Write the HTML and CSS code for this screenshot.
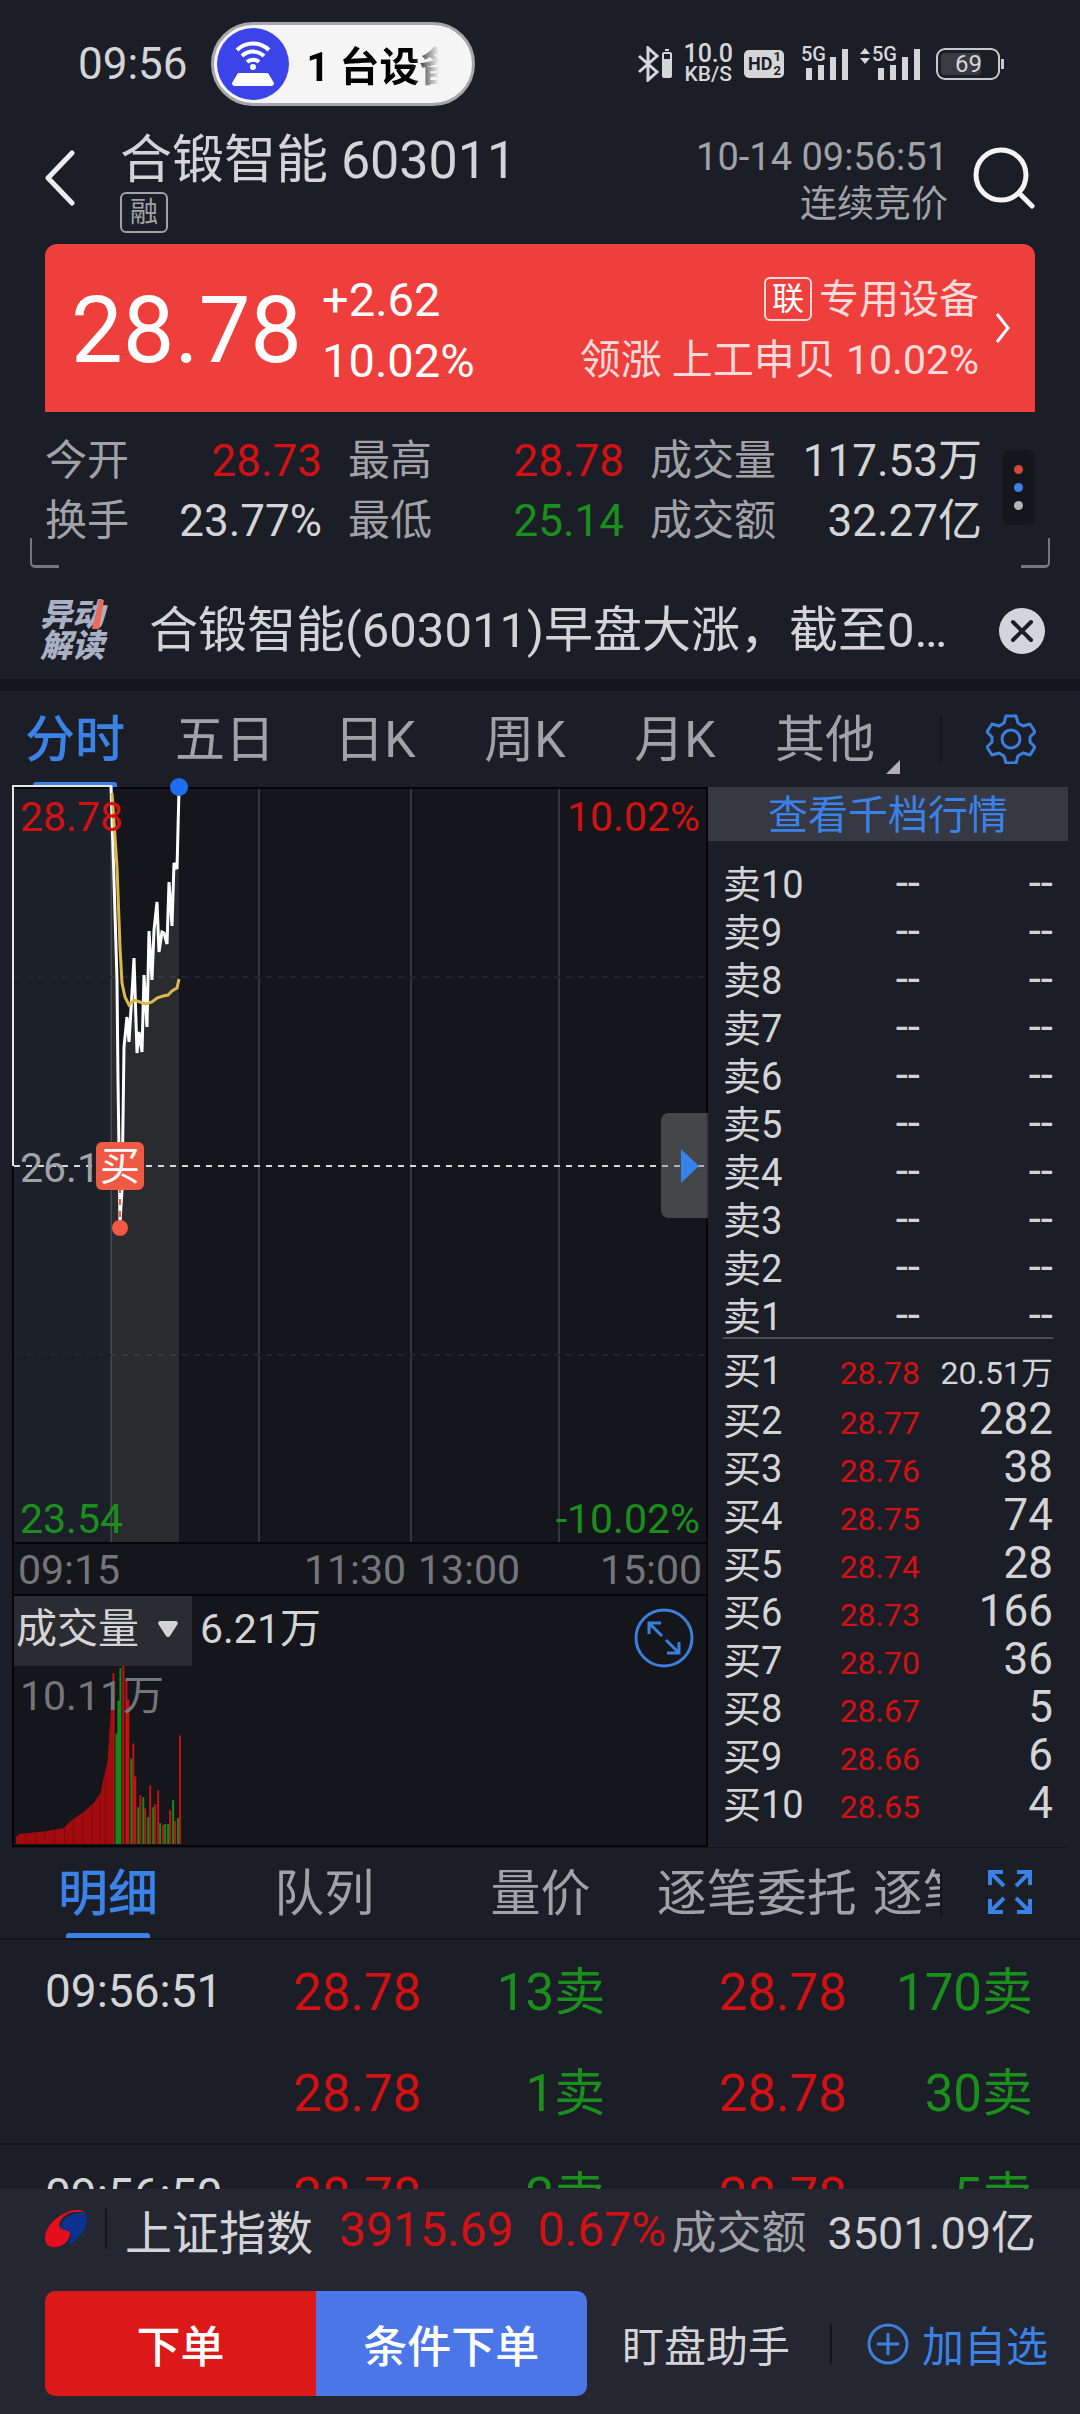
FILE: index.html
```html
<!DOCTYPE html>
<html lang="zh-CN">
<head>
<meta charset="utf-8">
<meta name="viewport" content="width=device-width, initial-scale=1">
<title>合锻智能 603011</title>
<link rel="stylesheet" href="styles.css">
</head>
<body>
<div class="statusbar">
  <div class="status-left">
    <span class="clock">09:56</span>
    <div class="pill">
      <span class="pill-icon">
        <svg viewBox="0 0 72 72" width="72" height="72" fill="none" stroke="#fff" stroke-width="4">
          <path d="M20 22a23 23 0 0 1 32 0M25 28a16 16 0 0 1 22 0M30 34a9 9 0 0 1 12 0"/>
          <circle cx="36" cy="39" r="3" fill="#fff" stroke="none"/>
          <path d="M21 45h30l6 10q0 3-3 3H18q-3 0-3-3z" fill="#fff" stroke="none"/>
        </svg>
      </span>
      <span class="pill-text">1 台设备</span>
    </div>
  </div>
  <div class="status-right">
    <svg viewBox="0 0 34 36" width="34" height="36" fill="none" stroke="#d6d6d8" stroke-width="3">
      <path d="M1 10l18 16-9 8V2l9 8L1 26"/>
      <path d="M26 6h6q2 0 2 2v22q0 2-2 2h-6q-2 0-2-2V8q0-2 2-2z" fill="#d6d6d8" stroke="none"/><path d="M27 3h4v2h-4z" fill="#d6d6d8" stroke="none"/><path d="M26 8h6v5h-6z" fill="#1c1e28" stroke="none"/>
    </svg>
    <span class="netspeed"><b class="speed">10.0</b><b>KB/S</b></span>
    <span class="hd">HD<span class="hd-num"><i>1</i><i>2</i></span></span>
    <span class="signal">
      <b>5G</b>
      <svg viewBox="0 0 44 32" width="44" height="32" fill="#d6d6d8"><path d="M1 20h6v12H1zM13 17h6v15h-6zM25 9h6v23h-6zM37 1h6v31h-6z"/></svg>
    </span>
    <span class="signal signal-2">
      <svg class="updown" viewBox="0 0 11 16" width="11" height="16" fill="#d6d6d8"><path d="M5 0l5 6H0zM5 16l5-6H0z"/></svg>
      <b>5G</b>
      <svg viewBox="0 0 44 32" width="44" height="32" fill="#d6d6d8"><path d="M1 20h6v12H1zM13 17h6v15h-6zM25 9h6v23h-6zM37 1h6v31h-6z"/></svg>
    </span>
    <span class="battery"><span class="battery-level">69</span></span>
  </div>
</div>

<header class="header">
  <button class="icon-btn back" aria-label="返回">
    <svg viewBox="0 0 32 56" width="32" height="56" fill="none" stroke="#ececee" stroke-width="5" stroke-linecap="round" stroke-linejoin="round"><path d="M28 3L4 28l24 25"/></svg>
  </button>
  <div class="title-block">
    <h1>合锻智能 603011</h1>
    <span class="tag">融</span>
  </div>
  <div class="time-block"><span>10-14 09:56:51</span><span class="phase">连续竞价</span></div>
  <button class="icon-btn" aria-label="搜索">
    <svg viewBox="0 0 64 64" width="64" height="64" fill="none" stroke="#f4f4f4" stroke-width="5" stroke-linecap="round"><circle cx="29" cy="29" r="25"/><path d="M47 47l13 13"/></svg>
  </button>
</header>

<main>
<section class="quote">
  <span class="price">28.78</span>
  <span class="change"><span>+2.62</span><span>10.02%</span></span>
  <a class="sector" href="#">
    <span class="sector-lines">
      <span class="sector-name"><span class="link-tag">联</span>专用设备</span>
      <span>领涨 上工申贝 10.02%</span>
    </span>
    <svg viewBox="0 0 16 32" width="16" height="32" fill="none" stroke="#fff" stroke-width="3"><path d="M2 2l11 14L2 30"/></svg>
  </a>
</section>

<section class="stats">
  <dl class="stats-grid">
    <div><dt>今开</dt><dd class="up">28.73</dd></div>
    <div><dt>最高</dt><dd class="up">28.78</dd></div>
    <div><dt>成交量</dt><dd>117.53万</dd></div>
    <div><dt>换手</dt><dd>23.77%</dd></div>
    <div><dt>最低</dt><dd class="down">25.14</dd></div>
    <div><dt>成交额</dt><dd>32.27亿</dd></div>
  </dl>
  <button class="more" aria-label="更多"><i class="dot-red"></i><i class="dot-blue"></i><i class="dot-gray"></i></button>
</section>

<section class="news">
  <span class="news-logo"><span>异动</span><span>解读</span>
    <svg class="news-slash" viewBox="0 0 12 30" width="12" height="30"><path d="M7 0h5L7 29H0z" fill="#ee6a5c"/></svg>
  </span>
  <a class="news-text" href="#">合锻智能(603011)早盘大涨，截至09:56</a>
  <button class="icon-btn" aria-label="关闭">
    <svg viewBox="0 0 46 46" width="46" height="46"><circle cx="23" cy="23" r="23" fill="#d4d5da"/><path d="M14 14l18 18M32 14L14 32" stroke="#1c1e28" stroke-width="4" stroke-linecap="round"/></svg>
  </button>
</section>

<nav class="tabs period-tabs">
  <button class="tab active">分时</button>
  <button class="tab">五日</button>
  <button class="tab">日K</button>
  <button class="tab">周K</button>
  <button class="tab">月K</button>
  <button class="tab has-more">其他</button>
  <button class="tab-tool" aria-label="设置">
    <svg viewBox="0 0 50 50" width="50" height="50" fill="none" stroke="#3b7fdd" stroke-width="3" stroke-linejoin="round"><path d="M20 2h10l2 7 5 3 7-2 5 8-5 5v5l5 5-5 8-7-2-5 3-2 7H20l-2-7-5-3-7 2-5-8 5-5v-5l-5-5 5-8 7 2 5-3z"/><circle cx="25" cy="25" r="9"/></svg>
  </button>
</nav>

<section class="market">
  <div class="chart-col">
    <div class="chart">
      <svg class="plot" viewBox="0 0 696 757">
        <rect x="1" y="1" width="694" height="755" fill="#15161b" stroke="#050509" stroke-width="2"/>
        <rect x="2" y="2" width="97" height="753" fill="#1c202a"/>
        <g stroke="#34353f" stroke-width="2"><path d="M99 2v753M247 2v753M399 2v753M547 2v753"/></g>
        <path d="M2 190h692M2 568h692" stroke="#23252d" stroke-width="2" stroke-dasharray="6 6"/>
        <path d="M99 0L102 93 105 193 106 293 108 435 110 403 112 260 115 230 117 255 120 206 122 171 125 266 127 245 130 265 132 188 135 240 137 144 140 193 142 143 145 115 147 165 150 145 152 146 155 157 157 95 160 139 162 76 165 82 167 2V755H99z" fill="#fff" fill-opacity=".09"/>
        <path d="M1 379V-1H100" fill="none" stroke="#e6e6e6" stroke-width="2"/>
        <path d="M2 379h692" stroke="#d8d8d8" stroke-width="2" stroke-dasharray="6 6"/>
        <path d="M99 -1L102 93 105 193 106 293 108 435 110 403 112 260 115 230 117 255 120 206 122 171 125 266 127 245 130 265 132 188 135 240 137 144 140 193 142 143 145 115 147 165 150 145 152 146 155 157 157 95 160 139 162 76 165 82 167 2" fill="none" stroke="#fff" stroke-width="3"/>
        <path d="M100 6L105 80 108 160 110 196 113 210 117 218 122 213 128 215 134 217 140 215 145 211 151 209 156 208 160 204 165 201 167 192" fill="none" stroke="#dcb84a" stroke-width="3"/>
        <path d="M108 400v35" stroke="#ee5a42" stroke-width="2" stroke-dasharray="6 6"/>
        <circle cx="108" cy="441" r="8" fill="#f05a42"/>
        <circle cx="167" cy="0" r="9" fill="#1e6fee"/>
      </svg>
      <span class="lbl top-left up">28.78</span>
      <span class="lbl top-right up">10.02%</span>
      <span class="lbl mid-left">26.16</span>
      <span class="lbl bottom-left down">23.54</span>
      <span class="lbl bottom-right down">-10.02%</span>
      <span class="buy-mark">买</span>
      <button class="drawer" aria-label="收起盘口"><svg viewBox="0 0 18 34" width="18" height="34"><path d="M0 0l18 17L0 34z" fill="#3582ec"/></svg></button>
    </div>
    <div class="axis"><span>09:15</span><span class="mid">11:30</span><span class="mid">13:00</span><span class="end">15:00</span></div>
    <div class="volume">
      <div class="volume-head">
        <button class="indicator">成交量<svg viewBox="0 0 20 16" width="20" height="16"><path d="M2 0h16q3 1 1 4l-7 11q-2 2-4 0L1 4Q-1 1 2 0z" fill="#d4d4d6"/></svg></button>
        <span>6.21万</span>
      </div>
      <svg class="plot" viewBox="0 0 696 180">
        <path d="M2 179V172L5 169 34 166 50 163 57 156 71 146 80 138 87 128 90 113 94 97 97 49 99 20V179z" fill="#a30c0e"/>
        <path d="M12 168v11M22 168v11M31 167v12M41 165v14M51 163v16M60 155v24M69 149v30M78 141v38M86 131v48M92 108v71" stroke="#7c0c10" stroke-width="1"/>
        <path d="M100 7V179M110 0V179M113 14V179M115 34V179M120 78V179M122 111V179M127 130V179M132 143V179M137 120V179M142 139V179M145 125V179M150 160V179M157 145V179M162 156V179M167 70V179" stroke="#c41212" stroke-width="2"/>
        <path d="M103 68V179M105 35V179M107 2V179M118 93V179M125 142V179M130 132V179M135 152V179M140 142V179M147 158V179M152 159V179M155 159V179M160 135V179M165 153V179" stroke="#168a16" stroke-width="2"/>
      </svg>
      <span class="lbl volume-max">10.11万</span>
      <button class="zoom-btn" aria-label="放大">
        <svg viewBox="0 0 60 60" width="60" height="60" fill="none" stroke="#3b7fdd" stroke-width="3"><circle cx="30" cy="30" r="28"/><path d="M15 26V15h12M15 15l13 13M33 45h12V34M45 45L32 32"/></svg>
      </button>
    </div>
  </div>

  <div class="book">
    <button class="book-head">查看千档行情</button>
    <table class="book-table sells">
      <tr><th>卖10</th><td>--</td><td>--</td></tr>
      <tr><th>卖9</th><td>--</td><td>--</td></tr>
      <tr><th>卖8</th><td>--</td><td>--</td></tr>
      <tr><th>卖7</th><td>--</td><td>--</td></tr>
      <tr><th>卖6</th><td>--</td><td>--</td></tr>
      <tr><th>卖5</th><td>--</td><td>--</td></tr>
      <tr><th>卖4</th><td>--</td><td>--</td></tr>
      <tr><th>卖3</th><td>--</td><td>--</td></tr>
      <tr><th>卖2</th><td>--</td><td>--</td></tr>
      <tr><th>卖1</th><td>--</td><td>--</td></tr>
    </table>
    <div class="book-divider"></div>
    <table class="book-table buys">
      <tr><th>买1</th><td class="px">28.78</td><td class="long">20.51万</td></tr>
      <tr><th>买2</th><td class="px">28.77</td><td>282</td></tr>
      <tr><th>买3</th><td class="px">28.76</td><td>38</td></tr>
      <tr><th>买4</th><td class="px">28.75</td><td>74</td></tr>
      <tr><th>买5</th><td class="px">28.74</td><td>28</td></tr>
      <tr><th>买6</th><td class="px">28.73</td><td>166</td></tr>
      <tr><th>买7</th><td class="px">28.70</td><td>36</td></tr>
      <tr><th>买8</th><td class="px">28.67</td><td>5</td></tr>
      <tr><th>买9</th><td class="px">28.66</td><td>6</td></tr>
      <tr><th>买10</th><td class="px">28.65</td><td>4</td></tr>
    </table>
  </div>
</section>

<nav class="tabs detail-tabs">
  <div class="tab-scroll">
    <button class="tab active">明细</button>
    <button class="tab">队列</button>
    <button class="tab">量价</button>
    <button class="tab">逐笔委托</button>
    <button class="tab">逐笔成交</button>
  </div>
  <button class="tab-tool" aria-label="全屏">
    <svg viewBox="0 0 44 44" width="44" height="44" fill="none" stroke="#3b82e6" stroke-width="4"><path d="M2 15V2h13M2 2l14 14M29 2h13v13M42 2L28 16M2 29v13h13M2 42l14-14M29 42h13V29M42 42L28 28"/></svg>
  </button>
</nav>

<section class="trades">
  <table class="trades-table">
    <colgroup><col class="c1"><col class="c2"><col class="c3"><col class="c4"><col class="c5"></colgroup>
    <tr><th>09:56:51</th><td class="up">28.78</td><td class="down">13卖</td><td class="up">28.78</td><td class="down">170卖</td></tr>
    <tr class="group-end"><th></th><td class="up">28.78</td><td class="down">1卖</td><td class="up">28.78</td><td class="down">30卖</td></tr>
    <tr><th>09:56:50</th><td class="up">28.78</td><td class="down">2卖</td><td class="up">28.78</td><td class="down">5卖</td></tr>
  </table>
</section>
</main>

<footer class="footer">
  <div class="index-row">
    <svg viewBox="0 0 42 42" width="42" height="42"><path d="M40 5C36 1 31 1 25 3 10 8 0 20 0 30c0 7 5 10 11 9 8-1 12-6 14-12 1-6-6-4-10-7C12 15 18 6 28 4q7-1 12 1z" fill="#e60d1c"/><path d="M40 5C30 3 16 10 15 20c4 3 12 1 11 8-1 4-2 7-4 10C35 31 42 20 42 11q0-4-2-6z" fill="#0b3291"/></svg>
    <span class="vline"></span>
    <span class="index-name">上证指数</span>
    <span class="index-val up">3915.69</span>
    <span class="index-pct up">0.67%</span>
    <span class="turnover"><span class="muted">成交额</span><span>3501.09亿</span></span>
  </div>
  <div class="action-row">
    <button class="order">下单</button><button class="cond">条件下单</button>
    <button class="assist">盯盘助手</button>
    <span class="vline"></span>
    <button class="add"><svg viewBox="0 0 42 42" width="42" height="42" fill="none" stroke="#3b7fdd" stroke-width="3"><circle cx="21" cy="21" r="19"/><path d="M21 10v22M10 21h22"/></svg>加自选</button>
  </div>
</footer>
</body>
</html>
```
FILE: styles.css
```css
:root {
  --bg: #1b1e27;
  --panel: #15161b;
  --text: #d4d4d6;
  --muted: #a1a2a6;
  --red: #d31113;
  --green: #1a8f1c;
  --blue: #3b82e6;
}
* { box-sizing: border-box; }
body {
  margin: 0;
  min-height: 100vh;
  display: flex;
  flex-direction: column;
  background: var(--bg);
  color: var(--text);
  font-family: Roboto, "Noto Sans CJK SC", sans-serif;
}
main { flex: 1 0 auto; display: flex; flex-direction: column; }
button { border: 0; padding: 0; background: none; color: inherit; font: inherit; }
a { color: inherit; text-decoration: none; }
svg { display: block; flex: none; }
h1, dl, dd { margin: 0; }
.up { color: var(--red); }
.down { color: var(--green); }
.muted { color: var(--muted); }

/* status bar */
.statusbar {
  height: 128px;
  padding: 0 80px 0 78px;
  display: flex;
  align-items: center;
  justify-content: space-between;
}
.status-left, .status-right { display: flex; align-items: center; }
.status-left { gap: 23px; }
.clock { font-size: 44px; }
.pill {
  width: 264px;
  height: 84px;
  padding: 3px;
  border: 3px solid #a6a6aa;
  border-radius: 42px;
  background: #f5f5f6;
  display: flex;
  align-items: center;
}
.pill-icon { width: 72px; height: 72px; border-radius: 50%; background: #3b44e8; flex: none; }
.pill-text {
  margin-left: 18px;
  width: 132px;
  overflow: hidden;
  white-space: nowrap;
  color: #000;
  font-size: 40px;
  font-weight: 700;
  -webkit-mask-image: linear-gradient(90deg, #000 80%, transparent);
  mask-image: linear-gradient(90deg, #000 80%, transparent);
}
.status-right { gap: 11px; color: #d6d6d8; }
.netspeed { display: flex; flex-direction: column; align-items: center; }
.netspeed b { font-size: 21px; line-height: 20px; font-weight: 500; }
.netspeed .speed { font-size: 25px; }
.hd {
  display: flex;
  width: 40px;
  height: 28px;
  padding-left: 4px;
  gap: 1px;
  border-radius: 5px;
  background: #d6d6d8;
  color: var(--bg);
  font-size: 18px;
  line-height: 28px;
  font-weight: 700;
}
.hd-num { display: flex; flex-direction: column; font-size: 13px; line-height: 14px; }
.hd-num i { font-style: normal; }
.signal { position: relative; display: flex; padding-left: 8px; margin-left: 2px; }
.signal b { position: absolute; left: 4px; top: -4px; font-size: 20px; line-height: 20px; font-weight: 500; }
.signal-2 { padding-left: 17px; margin-left: 0; }
.signal-2 b { left: 12px; }
.updown { position: absolute; left: 0; top: 0; }
.battery {
  position: relative;
  width: 64px;
  height: 32px;
  margin-left: 4px;
  padding: 3px;
  border: 2px solid #c8c8ca;
  border-radius: 9px;
}
.battery::after { content: ""; position: absolute; right: -6px; top: 9px; width: 3px; height: 10px; background: #c8c8ca; }
.battery-level {
  display: block;
  width: 40px;
  border-radius: 4px;
  background: #3a3b42;
  padding-left: 14px;
  font-size: 24px;
  line-height: 22px;
}

/* header */
.header { display: flex; padding: 5px 44px 11px; }
.header .icon-btn { display: flex; align-items: center; padding-bottom: 11px; }
.title-block { flex: 1; margin-left: 44px; display: flex; flex-direction: column; align-items: flex-start; gap: 3px; }
h1 { font-size: 52px; line-height: 56px; font-weight: 400; white-space: nowrap; }
.tag {
  width: 48px;
  height: 41px;
  border: 2px solid var(--muted);
  border-radius: 6px;
  color: var(--muted);
  font-size: 28px;
  line-height: 38px;
  text-align: center;
}
.time-block { display: flex; flex-direction: column; align-items: flex-end; margin-right: 24px; color: var(--muted); font-size: 38px; line-height: 48px; }
.phase { font-size: 37px; }

/* quote card */
.quote {
  margin: 0 45px;
  height: 168px;
  padding: 0 24px 0 26px;
  border-radius: 12px 12px 0 0;
  background: #ef3f3d;
  color: #fff;
  display: flex;
  align-items: center;
}
.price { font-size: 92px; line-height: 168px; padding-top: 6px; }
.change { margin-left: 20px; padding-top: 3px; display: flex; flex-direction: column; font-size: 47px; line-height: 61px; }
.sector { margin-left: auto; display: flex; align-items: center; gap: 16px; color: #fbdada; font-size: 41px; line-height: 61px; }
.sector-lines { display: flex; flex-direction: column; align-items: flex-end; padding-top: 3px; }
.sector-name { display: flex; align-items: center; gap: 7px; font-size: 40px; }
.link-tag { width: 48px; height: 44px; border: 2px solid #fbdada; border-radius: 6px; color: #fff; font-size: 32px; line-height: 40px; text-align: center; }

/* statistics */
.stats { position: relative; display: flex; align-items: center; gap: 20px; margin: 0 45px; padding: 19px 0 15px; }
.stats::before, .stats::after {
  content: "";
  position: absolute;
  bottom: -2px;
  width: 27px;
  height: 27px;
  border-bottom: 3px solid #76777c;
}
.stats::before { left: -15px; border-left: 2px solid #76777c; border-bottom-left-radius: 5px; }
.stats::after { right: -15px; border-right: 2px solid #76777c; border-bottom-right-radius: 5px; }
.stats-grid { flex: 1; display: grid; grid-template-columns: 277fr 276fr 332fr; column-gap: 26px; }
.stats-grid div { display: flex; justify-content: space-between; line-height: 60px; }
.stats-grid dt { color: var(--muted); font-size: 42px; }
.stats-grid dd { font-size: 44px; }
.more { width: 33px; height: 75px; margin-bottom: 8px; border-radius: 8px; background: var(--panel); display: flex; flex-direction: column; align-items: center; justify-content: center; gap: 9px; }
.more i { width: 9px; height: 9px; border-radius: 50%; }
.dot-red { background: #d04a38; }
.dot-blue { background: var(--blue); }
.dot-gray { background: #b4b4b6; }

/* news strip */
.news { display: flex; align-items: center; padding: 32px 35px 16px 40px; border-bottom: 12px solid var(--panel); }
.news-logo { position: relative; display: flex; flex-direction: column; width: 70px; color: #a9b0c2; font-size: 32px; line-height: 31px; font-weight: 900; font-style: italic; white-space: nowrap; }
.news-slash { position: absolute; left: 52px; top: 0; }
.news-text { flex: 1; min-width: 0; margin: 0 47px 0 39px; font-size: 49px; line-height: 65px; white-space: nowrap; overflow: hidden; text-overflow: ellipsis; }

/* tab rows */
.tabs { display: flex; }
.tab { position: relative; color: var(--muted); font-size: 50px; white-space: nowrap; }
.tab.active { color: var(--blue); font-weight: 500; }
.tab.active::after {
  content: "";
  position: absolute;
  left: 50%;
  bottom: 0;
  width: 84px;
  height: 5px;
  margin-left: -42px;
  border-radius: 3px 3px 0 0;
  background: var(--blue);
}
.period-tabs { height: 96px; }
.period-tabs .tab { flex: 150; padding-top: 2px; line-height: 94px; }
.has-more::after { content: ""; position: absolute; right: 0; bottom: 13px; border: 7px solid transparent; border-right-color: #b0b0b2; border-bottom-color: #b0b0b2; }
.tab-tool { flex: 180; position: relative; display: flex; align-items: center; justify-content: center; }
.tab-tool::before { content: ""; position: absolute; left: 40px; top: 25px; width: 2px; height: 45px; background: #14151b; }
.period-tabs .tab-tool svg { margin-left: 42px; }

/* chart and order book */
.market { display: flex; margin: 0 12px; border-bottom: 1px solid #14151b; }
.chart-col { flex: 696; min-width: 0; }
.book { flex: 360; min-width: 0; }
.chart, .volume { position: relative; }
.plot { width: 100%; height: auto; overflow: visible; }
.lbl { position: absolute; font-size: 41px; line-height: 48px; }
.top-left { left: 8px; top: 6px; }
.top-right { right: 8px; top: 6px; }
.mid-left { left: 8px; top: 50%; margin-top: -22px; color: var(--muted); }
.bottom-left { left: 8px; bottom: 1px; }
.bottom-right { right: 8px; bottom: 1px; }
.buy-mark {
  position: absolute;
  left: 84px;
  top: 355px;
  width: 48px;
  height: 48px;
  border-radius: 6px;
  background: #ef5a44;
  color: #fff;
  font-size: 40px;
  line-height: 50px;
  text-align: center;
}
.drawer {
  position: absolute;
  right: 0;
  top: 326px;
  width: 47px;
  height: 105px;
  padding-left: 20px;
  border-radius: 8px 0 0 8px;
  background: rgba(128, 128, 130, .45);
}
.axis {
  display: grid;
  grid-template-columns: 280fr 114fr 114fr 176fr;
  border: solid #08080c;
  border-width: 0 2px;
  padding: 2px 4px 0;
  background: var(--panel);
  color: #74757a;
  font-size: 41px;
  line-height: 48px;
}
.axis .mid { text-align: center; }
.axis .end { text-align: right; }
.volume { border: 2px solid #050509; background: var(--panel); }
.volume-head { display: flex; align-items: center; height: 70px; gap: 8px; font-size: 41px; line-height: 66px; align-items: flex-start; }
.indicator { display: flex; align-items: center; width: 178px; height: 70px; padding: 0 0 4px 2px; gap: 19px; background: #2b2c31; }
.volume-max { left: 6px; top: 76px; color: #74757a; }
.zoom-btn { position: absolute; right: 12px; top: 12px; }
.book-head { display: block; width: 100%; height: 54px; padding-top: 4px; background: #363844; color: var(--blue); font-size: 40px; line-height: 50px; }
.book-table { border-collapse: collapse; table-layout: fixed; width: calc(100% - 30px); margin-left: 15px; }
.book-table tr { height: 48px; }
.book-table th, .book-table td { padding: 10px 0 0; vertical-align: baseline; line-height: 32px; font-weight: 400; text-align: right; font-size: 44px; white-space: nowrap; width: 133px; }
.book-table th { width: auto; text-align: left; font-size: 38px; }
.sells { margin-top: 16px; }
.book-divider { height: 2px; margin: 0 15px 6px; background: #4b4d57; }
.book-table .px { color: var(--red); font-size: 32px; }
.book-table .long { font-size: 32px; }

/* detail tabs */
.detail-tabs { height: 92px; border-bottom: 2px solid #14151b; }
.tab-scroll { flex: 940; min-width: 0; overflow: hidden; display: flex; }
.detail-tabs .tab { flex: 0 0 23%; padding-top: 3px; line-height: 87px; }
.detail-tabs .tab-tool { flex: 140; padding-bottom: 2px; }
.detail-tabs .tab-tool::before { left: 0; top: 24px; }

/* trade list */
.trades { flex: 1 0 249px; height: 249px; overflow: hidden; }
.trades-table { width: 100%; border-collapse: collapse; table-layout: fixed; }
.trades-table tr { height: 102px; }
.trades-table th, .trades-table td { padding: 4px 0 0; font-weight: 400; font-size: 51px; line-height: 64px; text-align: right; }
.trades-table th { padding: 0 0 0 45px; text-align: left; font-size: 46px; }
.trades-table td:last-child { padding-right: 47px; }
.trades-table td:nth-child(2) { padding-right: 0; }
.trades-table .group-end { border-bottom: 2px solid #14151b; }
.c1 { width: 238px; }
.c2 { width: 17%; }
.c3 { width: 17%; }
.c4 { width: 22.4%; }
.c5 { width: auto; }

/* footer */
.footer { position: relative; background: #242632; padding: 0 32px 18px 45px; }
.index-row { display: flex; align-items: center; height: 84px; padding: 0 12px 4px 0; font-size: 48px; white-space: nowrap; }
.vline { width: 2px; height: 40px; background: #14151b; flex: none; }
.index-row .vline { margin: 0 18px; }
.index-name { font-size: 47px; }
.index-val { margin-left: 26px; }
.index-pct { margin-left: 24px; }
.turnover { margin-left: auto; display: flex; gap: 21px; font-size: 45px; }
.action-row { display: flex; align-items: center; height: 105px; margin-top: 18px; font-size: 42px; }
.order, .cond { flex: 0 0 27%; height: 105px; color: #fff; font-size: 44px; font-weight: 500; }
.order { border-radius: 10px 0 0 10px; background: #dc1818; }
.cond { border-radius: 0 10px 10px 0; background: #4a76e8; }
.assist { margin-left: auto; }
.action-row .vline { margin: 0 35px 0 40px; }
.add { display: flex; align-items: center; gap: 13px; color: var(--blue); }
```
